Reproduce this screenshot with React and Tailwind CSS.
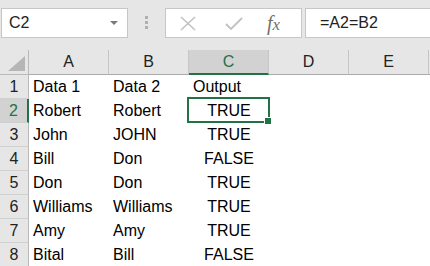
import React from "react";

const rows = [
  ["Data 1", "Data 2", "Output"],
  ["Robert", "Robert", "TRUE"],
  ["John", "JOHN", "TRUE"],
  ["Bill", "Don", "FALSE"],
  ["Don", "Don", "TRUE"],
  ["Williams", "Williams", "TRUE"],
  ["Amy", "Amy", "TRUE"],
  ["Bital", "Bill", "FALSE"],
];

const cols = ["A", "B", "C", "D", "E"];

export default function App() {
  return (
    <div
      className="w-[430px] h-[266px] overflow-hidden bg-white text-black"
      style={{ fontFamily: '"Liberation Sans", Arial, sans-serif' }}
    >
      {/* formula bar area */}
      <div className="h-[50px] bg-[#e6e6e6] pt-[8px] flex items-start">
        <div className="ml-[1px] w-[127px] h-[30px] bg-white border border-[#c6c6c6] flex items-center pl-[7px] pr-[9px]">
          <span className="text-[16px] text-[#222] flex-1">C2</span>
          <svg width="8" height="4" viewBox="0 0 8 4">
            <path d="M0 0 H8 L4 4 Z" fill="#7a7a7a" />
          </svg>
        </div>
        <div className="ml-[17px] mt-[8px] flex flex-col gap-[2px]">
          <div className="w-[3px] h-[3px] bg-[#b0b0b0]" />
          <div className="w-[3px] h-[3px] bg-[#b0b0b0]" />
          <div className="w-[3px] h-[3px] bg-[#b0b0b0]" />
        </div>
        <div className="ml-[17px] w-[137px] h-[30px] bg-white border border-[#c6c6c6] flex items-center">
          <svg className="ml-[14px]" width="16" height="15" viewBox="0 0 16 15">
            <path d="M1 1 L15 14 M15 1 L1 14" stroke="#c2c2c2" strokeWidth="1.6" fill="none" />
          </svg>
          <svg className="ml-[29px]" width="18" height="13" viewBox="0 0 18 13">
            <path d="M1 7 L6 12 L17 1" stroke="#c2c2c2" strokeWidth="1.8" fill="none" />
          </svg>
          <span
            className="ml-[24px] text-[20px] italic text-[#707070] leading-none"
            style={{ fontFamily: '"Liberation Serif", "Times New Roman", serif' }}
          >
            f<span className="text-[17px]">x</span>
          </span>
        </div>
        <div className="ml-[3px] flex-1 h-[30px] bg-white border border-[#c6c6c6] border-r-0 flex items-center pl-[14px]">
          <span className="text-[16px] text-[#222]">=A2=B2</span>
        </div>
      </div>

      {/* column headers */}
      <div className="flex h-[25px] bg-[#e6e6e6]">
        <div className="w-[29px] h-[25px] border-r border-b border-[#b9b9b9] flex items-end justify-end pr-[3px] pb-[3px]">
          <svg width="17" height="15" viewBox="0 0 17 15">
            <path d="M17 0 L17 15 L0 15 Z" fill="#b6b6b6" />
          </svg>
        </div>
        {cols.map((c) =>
          c === "C" ? (
            <div
              key={c}
              className="w-[80px] h-[25px] bg-[#d2d2d2] border-r border-[#c6c6c6] border-b-2 border-b-[#217346] flex items-center justify-center text-[16px] text-[#217346]"
            >
              {c}
            </div>
          ) : (
            <div
              key={c}
              className="w-[80px] h-[25px] border-r border-b border-[#c6c6c6] border-b-[#ababab] flex items-center justify-center text-[16px] text-[#222]"
            >
              {c}
            </div>
          )
        )}
        <div className="flex-1 h-[25px] border-b border-[#ababab]" />
      </div>

      {/* rows */}
      {rows.map((r, i) => {
        const sel = i === 1;
        return (
          <div key={i} className="flex h-[24px]">
            <div
              className={
                sel
                  ? "w-[29px] h-[24px] bg-[#d2d2d2] border-b border-[#d0d0d0] border-r-2 border-r-[#217346] flex items-center justify-center text-[16px] text-[#217346]"
                  : "w-[29px] h-[24px] bg-[#e6e6e6] border-b border-[#d0d0d0] border-r border-r-[#b9b9b9] flex items-center justify-center text-[16px] text-[#222]"
              }
            >
              {i + 1}
            </div>
            <div className="w-[80px] h-[23px] flex items-center pl-[4px] text-[16px] whitespace-nowrap">
              {r[0]}
            </div>
            <div className="w-[80px] h-[23px] flex items-center pl-[4px] text-[16px] whitespace-nowrap">
              {r[1]}
            </div>
            <div
              className={
                "relative w-[80px] h-[23px] flex items-center text-[16px] whitespace-nowrap " +
                (i === 0 ? "pl-[4px]" : "justify-center")
              }
            >
              {r[2]}
              {sel && (
                <>
                  <div className="absolute left-[-2px] top-[-2px] right-[-1px] bottom-[-1px] border-2 border-[#217346]" />
                  <div className="absolute right-[-3px] bottom-[-3px] w-[6px] h-[6px] bg-[#217346] border border-white box-content" />
                </>
              )}
            </div>
          </div>
        );
      })}
    </div>
  );
}
